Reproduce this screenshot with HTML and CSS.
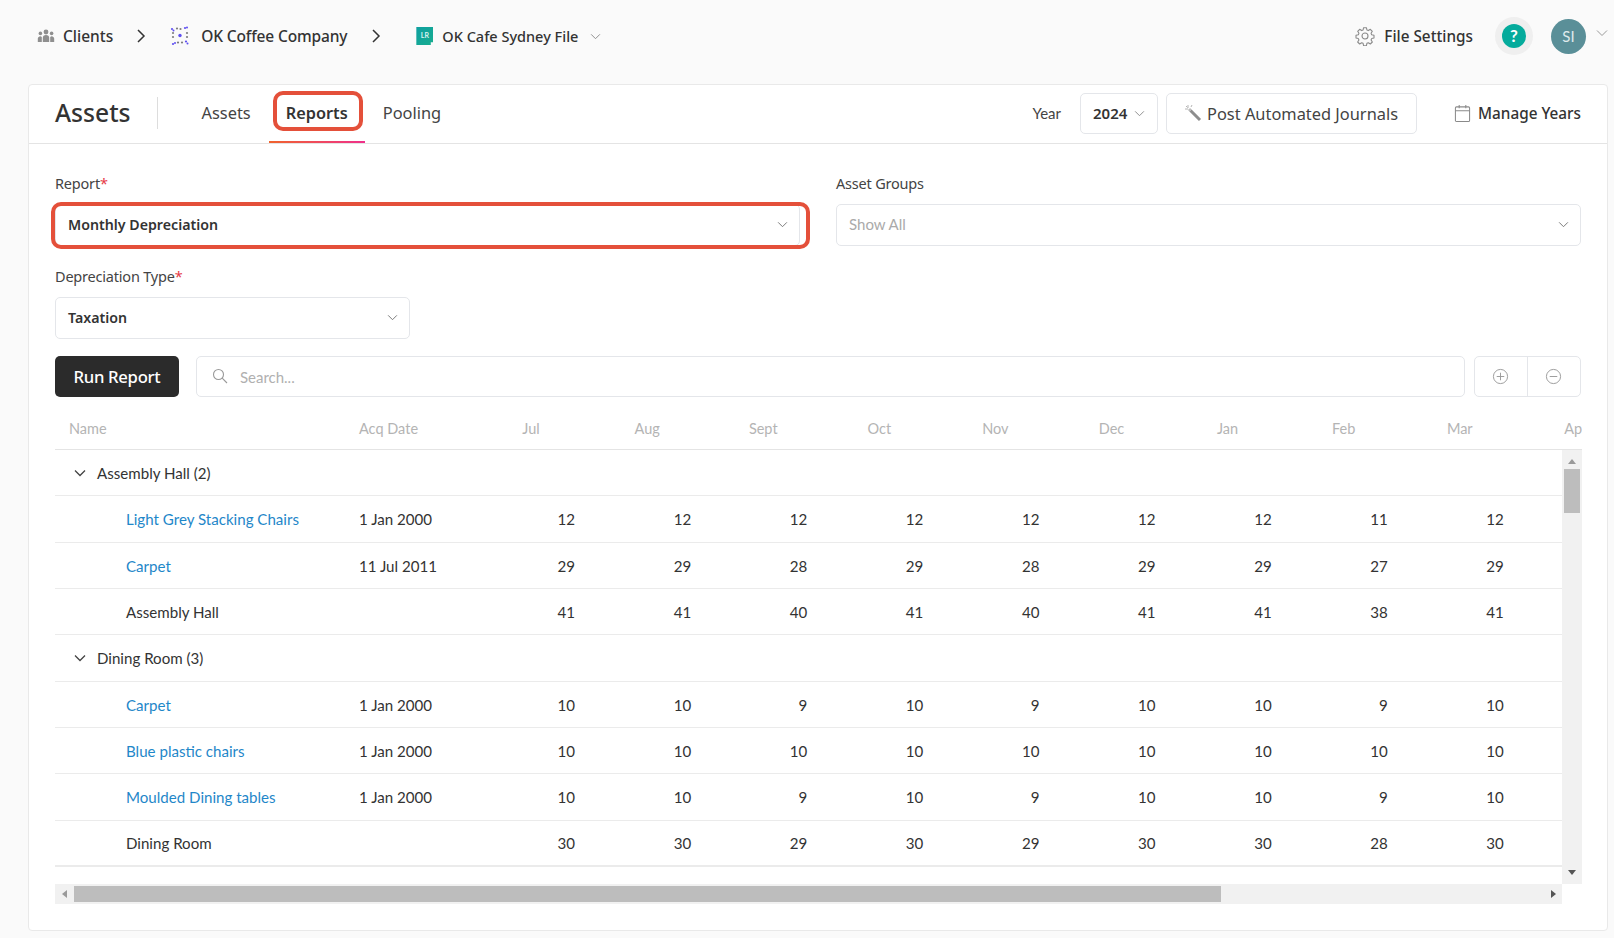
FILE: index.html
```html
<!DOCTYPE html>
<html lang="en">
<head>
<meta charset="utf-8">
<title>Assets - Reports</title>
<link rel="stylesheet" href="styles.css">
</head>
<body>
<header class="topbar">
  <nav class="crumbs">
    <a class="crumb crumb-clients">
      <svg class="ico-people" viewBox="0 0 18 14"><g fill="#8f8f8f"><circle cx="9" cy="3" r="2.4"/><circle cx="3.4" cy="4.4" r="1.8"/><circle cx="14.6" cy="4.4" r="1.8"/><path d="M5.8 13V9a3.2 3 0 0 1 6.4 0v4z"/><path d="M.8 13V9.4a2.4 2.4 0 0 1 4-1.4v5zM17.2 13V9.4a2.4 2.4 0 0 0-4-1.4v5z"/></g></svg>
      <span>Clients</span>
    </a>
    <svg class="sep" viewBox="0 0 10 16"><path d="M2 2l6 6-6 6" fill="none" stroke="#333" stroke-width="1.5"/></svg>
    <a class="crumb crumb-company">
      <svg class="ico-dots" viewBox="0 0 20 20"><g fill="#7d7d7d"><circle cx="7" cy="2.5" r="1.1"/><circle cx="10.5" cy="3" r="1.1"/><circle cx="3" cy="7" r="1.1"/><circle cx="3" cy="11" r="1.1"/><circle cx="17" cy="7" r="1.1"/><circle cx="17" cy="11" r="1.1"/><circle cx="8" cy="16.5" r="1.1"/><circle cx="12" cy="16.5" r="1.1"/></g><g fill="#5f50f0"><circle cx="10" cy="9.5" r="1.7"/><circle cx="15" cy="2" r="1.1"/><circle cx="17" cy="1.5" r="1"/><circle cx="2" cy="3" r="1.1"/><circle cx="3.5" cy="4.5" r="1"/><circle cx="3" cy="18" r="1.1"/><circle cx="5" cy="17" r="1"/><circle cx="16" cy="15.5" r="1.1"/><circle cx="17.5" cy="17.5" r="1"/></g></svg>
      <span>OK Coffee Company</span>
    </a>
    <svg class="sep sep-second" viewBox="0 0 10 16"><path d="M2 2l6 6-6 6" fill="none" stroke="#333" stroke-width="1.5"/></svg>
    <a class="crumb crumb-file">
      <span class="ico-lr">LR</span>
      <span>OK Cafe Sydney File</span>
      <svg class="chev" viewBox="0 0 12 8"><path d="M1 1.5l5 5 5-5" fill="none" stroke="#8c8c8c" stroke-width="1.1"/></svg>
    </a>
  </nav>
  <div class="top-actions">
    <a class="file-settings">
      <svg class="ico-gear" viewBox="0 0 24 24"><path d="M10.3 2h3.4l.6 2.8 1.7.7 2.4-1.5 2.4 2.4-1.5 2.4.7 1.7 2.8.6v3.4l-2.8.6-.7 1.7 1.5 2.4-2.4 2.4-2.4-1.5-1.7.7-.6 2.8h-3.4l-.6-2.8-1.7-.7-2.4 1.5-2.4-2.4 1.5-2.4-.7-1.7-2.8-.6v-3.4l2.8-.6.7-1.7-1.5-2.4 2.4-2.4 2.4 1.5 1.7-.7z" fill="none" stroke="#8a8a8a" stroke-width="1.3" stroke-linejoin="round"/><circle cx="12" cy="12" r="3.6" fill="none" stroke="#8a8a8a" stroke-width="1.3"/></svg>
      <span>File Settings</span>
    </a>
    <span class="help"><span class="help-dot">?</span></span>
    <span class="avatar">SI</span>
    <svg class="chev chev-user" viewBox="0 0 12 8"><path d="M1 1.5l5 5 5-5" fill="none" stroke="#9a9a9a" stroke-width="1"/></svg>
  </div>
</header>

<main class="card">
  <div class="card-head">
    <h1 class="title">Assets</h1>
    <div class="tabs">
      <a class="tab">Assets</a>
      <a class="tab tab-active"><span class="mark-tab">Reports</span></a>
      <a class="tab">Pooling</a>
    </div>
    <div class="head-actions">
      <span class="year-label">Year</span>
      <button class="btn btn-year">2024<svg class="chev" viewBox="0 0 12 8"><path d="M1 1.5l5 5 5-5" fill="none" stroke="#8c8c8c" stroke-width="1.1"/></svg></button>
      <button class="btn btn-post">
        <svg class="ico-wand" viewBox="0 0 18 18"><path d="M6.5 6.5L16 16" stroke="#8d8d8d" stroke-width="3"/><path d="M5 5l1.6 1.6" stroke="#bbb" stroke-width="3"/><g stroke="#b5b5b5" stroke-width="1"><path d="M4 1v3M1 5h3M2 2l1.5 1.5M8 1L7 3"/></g></svg>
        Post Automated Journals
      </button>
      <a class="manage">
        <svg class="ico-cal" viewBox="0 0 18 20"><rect x="1.5" y="3" width="15" height="15.5" rx="1.2" fill="none" stroke="#8a8a8a" stroke-width="1.1"/><path d="M1.5 7h15M5.5 1v3.5M12.5 1v3.5" stroke="#8a8a8a" stroke-width="1.1" fill="none"/></svg>
        Manage Years
      </a>
    </div>
  </div>

  <div class="card-body">
    <div class="filters">
      <div class="field">
        <label class="label">Report<i>*</i></label>
        <div class="select select-marked"><b>Monthly Depreciation</b><svg class="chev" viewBox="0 0 12 8"><path d="M1 1.5l5 5 5-5" fill="none" stroke="#777" stroke-width="1.1"/></svg></div>
      </div>
      <div class="field">
        <label class="label">Asset Groups</label>
        <div class="select"><span class="placeholder">Show All</span><svg class="chev" viewBox="0 0 12 8"><path d="M1 1.5l5 5 5-5" fill="none" stroke="#777" stroke-width="1.1"/></svg></div>
      </div>
      <div class="field field-type">
        <label class="label">Depreciation Type<i>*</i></label>
        <div class="select"><b>Taxation</b><svg class="chev" viewBox="0 0 12 8"><path d="M1 1.5l5 5 5-5" fill="none" stroke="#777" stroke-width="1.1"/></svg></div>
      </div>
    </div>

    <div class="toolbar">
      <button class="btn-run">Run Report</button>
      <div class="search">
        <svg class="ico-search" viewBox="0 0 16 16"><circle cx="6.5" cy="6.5" r="5" fill="none" stroke="#999" stroke-width="1.1"/><path d="M10.2 10.2L15 15" stroke="#999" stroke-width="1.1"/></svg>
        <span>Search...</span>
      </div>
      <div class="zoom-group">
        <span class="zoom-btn"><svg viewBox="0 0 18 18"><circle cx="9" cy="9" r="7.5" fill="none" stroke="#999" stroke-width="1"/><path d="M5 9h8M9 5v8" stroke="#999" stroke-width="1"/></svg></span>
        <span class="zoom-btn"><svg viewBox="0 0 18 18"><circle cx="9" cy="9" r="7.5" fill="none" stroke="#999" stroke-width="1"/><path d="M5 9h8" stroke="#999" stroke-width="1"/></svg></span>
      </div>
    </div>

    <div class="grid-wrap">
      <div class="grid-head">
        <span class="hc-name">Name</span><span class="hc-date">Acq Date</span>
        <span>Jul</span><span>Aug</span><span>Sept</span><span>Oct</span><span>Nov</span><span>Dec</span><span>Jan</span><span>Feb</span><span>Mar</span><span>Apr</span>
      </div>
      <div class="grid-main">
        <div class="grid-rows">
          <div class="row row-group"><svg class="chev" viewBox="0 0 12 8"><path d="M1 1.5l5 5 5-5" fill="none" stroke="#444" stroke-width="1.3"/></svg><span>Assembly Hall (2)</span></div>
          <div class="row"><a class="name link">Light Grey Stacking Chairs</a><span class="date">1 Jan 2000</span><span>12</span><span>12</span><span>12</span><span>12</span><span>12</span><span>12</span><span>12</span><span>11</span><span>12</span></div>
          <div class="row"><a class="name link">Carpet</a><span class="date">11 Jul 2011</span><span>29</span><span>29</span><span>28</span><span>29</span><span>28</span><span>29</span><span>29</span><span>27</span><span>29</span></div>
          <div class="row"><span class="name">Assembly Hall</span><span class="date"></span><span>41</span><span>41</span><span>40</span><span>41</span><span>40</span><span>41</span><span>41</span><span>38</span><span>41</span></div>
          <div class="row row-group"><svg class="chev" viewBox="0 0 12 8"><path d="M1 1.5l5 5 5-5" fill="none" stroke="#444" stroke-width="1.3"/></svg><span>Dining Room (3)</span></div>
          <div class="row"><a class="name link">Carpet</a><span class="date">1 Jan 2000</span><span>10</span><span>10</span><span>9</span><span>10</span><span>9</span><span>10</span><span>10</span><span>9</span><span>10</span></div>
          <div class="row"><a class="name link">Blue plastic chairs</a><span class="date">1 Jan 2000</span><span>10</span><span>10</span><span>10</span><span>10</span><span>10</span><span>10</span><span>10</span><span>10</span><span>10</span></div>
          <div class="row"><a class="name link">Moulded Dining tables</a><span class="date">1 Jan 2000</span><span>10</span><span>10</span><span>9</span><span>10</span><span>9</span><span>10</span><span>10</span><span>9</span><span>10</span></div>
          <div class="row row-last"><span class="name">Dining Room</span><span class="date"></span><span>30</span><span>30</span><span>29</span><span>30</span><span>29</span><span>30</span><span>30</span><span>28</span><span>30</span></div>
        </div>
        <div class="vscroll">
          <i class="arrow-up"></i>
          <i class="vthumb"></i>
          <i class="arrow-down"></i>
        </div>
      </div>
      <div class="hscroll">
        <i class="arrow-left"></i>
        <i class="hthumb"></i>
        <i class="arrow-right"></i>
      </div>
    </div>
  </div>
</main>
</body>
</html>
```
FILE: styles.css
```css
* { box-sizing: border-box; }
html, body { margin: 0; padding: 0; }
body {
  width: 1614px;
  height: 938px;
  overflow: hidden;
  background: #fafafa;
  color: #333;
  font-family: "Noto Sans", "Liberation Sans", sans-serif;
}
svg { display: block; flex: none; }

/* top bar */
.topbar {
  height: 84px;
  padding: 0 6px 12px 37px;
  display: flex;
  align-items: center;
  justify-content: space-between;
}
.crumbs { display: flex; align-items: center; }
.crumb {
  display: flex;
  align-items: center;
  font-size: 15.5px;
  font-weight: 500;
  color: #333;
}
.crumb-company { letter-spacing: -.15px; }
.crumb-file { font-size: 14.5px; }
.ico-people { width: 18px; height: 14px; margin-right: 8px; }
.ico-dots { width: 20px; height: 20px; margin-right: 11px; }
.ico-lr {
  width: 17px;
  height: 18px;
  margin-right: 9px;
  background: linear-gradient(135deg, #0f9fa0, #17ad8f);
  color: #d9f3f1;
  font: 700 7px/17px "Lato", sans-serif;
  text-align: center;
  clip-path: polygon(0 0, 100% 0, 100% 85%, 85% 85%, 85% 100%, 0 100%);
}
.sep { width: 10px; height: 16px; margin: 0 24px 0 23px; }
.sep-second { margin: 0 35px 0 24px; }
.chev { width: 11px; height: 7px; }
.crumb-file .chev { margin-left: 12px; }
.top-actions { display: flex; align-items: center; }
.file-settings {
  display: flex;
  align-items: center;
  font-size: 15.3px;
  font-weight: 500;
  color: #333;
}
.ico-gear { width: 20px; height: 20px; margin-right: 9px; }
.help {
  width: 38px;
  height: 38px;
  margin-left: 22px;
  border-radius: 50%;
  background: #efefef;
  display: flex;
  align-items: center;
  justify-content: center;
}
.help-dot {
  width: 24px;
  height: 24px;
  border-radius: 50%;
  background: #05ab9c;
  color: #fff;
  font: 700 17px/24px "Lato", sans-serif;
  text-align: center;
}
.avatar {
  width: 35px;
  height: 35px;
  margin-left: 18px;
  border-radius: 50%;
  background: #5a8f98;
  color: #dfeaec;
  font: 400 15px/35px "Lato", sans-serif;
  text-align: center;
}
.chev-user { width: 12px; height: 8px; margin: -6px 0 0 10px; }

/* card */
.card {
  width: 1580px;
  height: 847px;
  margin-left: 28px;
  background: #fff;
  border: 1px solid #e9e9e9;
  border-radius: 4px;
}
.card-head {
  height: 59px;
  padding: 0 26px 2px;
  display: flex;
  align-items: center;
  border-bottom: 1px solid #e4e4e4;
}
.title {
  margin: 0;
  padding-right: 26px;
  height: 32px;
  border-right: 1px solid #ddd;
  font-size: 24.6px;
  line-height: 32px;
  font-weight: 500;
  color: #333;
}
.tabs { display: flex; align-self: stretch; margin: 0 0 -2px 44px; }
.tab {
  display: flex;
  align-items: center;
  padding: 0 17px 4px 0;
  font-size: 16.4px;
  color: #444;
}
.tab-active {
  width: 96px;
  padding: 0 0 1px;
  justify-content: center;
  margin: 0 18px 0 1px;
  font-size: 16.3px;
  font-weight: 600;
  color: #333;
  border-bottom: 2px solid;
  border-image: linear-gradient(90deg, #f0642c, #ef2f8c) 1;
}
.mark-tab { position: relative; }
.mark-tab::after {
  content: "";
  position: absolute;
  left: -13px;
  right: -15px;
  top: -11px;
  bottom: -7px;
  border: 4px solid #e4503a;
  border-radius: 10px;
}
.head-actions { margin-left: auto; display: flex; align-items: center; }
.year-label { font: 400 15px "Lato", sans-serif; color: #444; margin-right: 19px; }
.btn {
  height: 41px;
  background: #fff;
  border: 1px solid #e4e6ea;
  border-radius: 5px;
  display: flex;
  align-items: center;
  font-family: "Noto Sans", sans-serif;
  color: #333;
}
.btn-year {
  width: 78px;
  padding: 0 0 0 12px;
  font-size: 15px;
  font-weight: 600;
  gap: 7px;
  margin-right: 8px;
}
.btn-post {
  width: 251px;
  padding: 0 0 0 17px;
  font-size: 16.4px;
  gap: 5px;
  color: #444;
}
.ico-wand { width: 18px; height: 18px; }
.manage {
  margin-left: 37px;
  display: flex;
  align-items: center;
  gap: 7px;
  font-size: 15.3px;
  font-weight: 500;
}
.ico-cal { width: 17px; height: 19px; }

.card-body { padding: 28px 26px 0; }
.filters {
  display: grid;
  grid-template-columns: 745px 745px;
  column-gap: 36px;
  row-gap: 19px;
}
.label {
  display: block;
  height: 22px;
  margin-bottom: 10px;
  font: 400 14.5px/22px "Noto Sans", sans-serif;
  letter-spacing: -.2px;
  color: #444;
}
.label i { color: #e63946; font-style: normal; }
.field-type { width: 355px; }
.select {
  position: relative;
  height: 42px;
  padding: 0 11px 2px 12px;
  background: #fff;
  border: 1px solid #e4e6ea;
  border-radius: 5px;
  display: flex;
  align-items: center;
  justify-content: space-between;
  font-size: 14.2px;
  color: #333;
}
.select b { font-weight: 600; }
.placeholder { font: 400 15px "Lato", sans-serif; color: #aaa; }
.select-marked::after {
  content: "";
  position: absolute;
  left: -5px;
  right: -11px;
  top: -3px;
  bottom: -4px;
  border: 4px solid #e4503a;
  border-radius: 10px;
}

.toolbar { display: flex; margin-top: 17px; height: 41px; }
.btn-run {
  width: 124px;
  height: 41px;
  border: 0;
  border-radius: 5px;
  background: #2b2b2b;
  color: #fff;
  font: 500 16.7px "Noto Sans", sans-serif;
  letter-spacing: -.3px;
}
.search {
  width: 1270px;
  margin-left: 17px;
  padding-left: 15px;
  border: 1px solid #e4e6ea;
  border-radius: 5px;
  display: flex;
  align-items: center;
  gap: 12px;
  font: 400 15px "Lato", sans-serif;
  color: #b0b0b0;
}
.ico-search { width: 16px; height: 16px; margin-top: -2px; }
.zoom-group {
  width: 107px;
  margin-left: 9px;
  display: flex;
  border: 1px solid #e4e6ea;
  border-radius: 5px;
}
.zoom-btn {
  flex: 1;
  display: flex;
  align-items: center;
  justify-content: center;
  padding-right: 2px;
}
.zoom-btn + .zoom-btn { border-left: 1px solid #e4e6ea; }
.zoom-btn svg { width: 17px; height: 17px; }

/* data grid */
.grid-wrap { width: 1527px; font-family: "Lato", sans-serif; overflow: hidden; }
.grid-head {
  height: 53px;
  padding-top: 10px;
  display: grid;
  grid-template-columns: 304px 114px repeat(10, 116.1px);
  align-items: center;
  border-bottom: 1px solid #e4e4e4;
  font-size: 14.5px;
  color: #b4b4b4;
  text-align: center;
  white-space: nowrap;
  overflow: hidden;
}
.hc-name { text-align: left; padding-left: 14px; }
.hc-date { text-align: left; }
.grid-main { display: flex; height: 434px; }
.grid-rows { width: 1507px; overflow: hidden; flex: none; }
.row {
  height: 46.33px;
  padding-top: 1px;
  display: grid;
  grid-template-columns: 304px 114px repeat(9, 116.1px);
  align-items: center;
  border-bottom: 1px solid #ebebeb;
  font-size: 15.1px;
  color: #333;
  text-align: right;
  white-space: nowrap;
}
.row > span { padding-right: 14px; }
.row .name { padding-left: 71px; text-align: left; padding-right: 0; }
.row .date { text-align: left; padding: 0; }
.link { color: #1f87c9; }
.row-group {
  display: flex;
  align-items: center;
  padding-left: 19px;
  gap: 11px;
  text-align: left;
}
.row-group > span { padding: 0; }
.row-group .chev { width: 12px; height: 8px; }
.row-last { border-bottom-width: 2px; }

.vscroll {
  width: 20px;
  flex: none;
  background: #f1f1f1;
  position: relative;
  display: flex;
  flex-direction: column;
  align-items: center;
}
.vthumb { width: 16px; height: 44px; margin-top: 5px; background: #bdbdbd; }
.arrow-up {
  margin-top: 9px;
  border: 4px solid transparent;
  border-top: 0;
  border-bottom: 5px solid #9a9a9a;
}
.arrow-down {
  margin-top: auto;
  margin-bottom: 9px;
  border: 4px solid transparent;
  border-bottom: 0;
  border-top: 5px solid #555;
}
.hscroll {
  width: 1507px;
  height: 20px;
  background: #f1f1f1;
  display: flex;
  align-items: center;
}
.hthumb { width: 1147px; height: 16px; margin-left: 7px; background: #bdbdbd; }
.arrow-left {
  margin-left: 7px;
  border: 4px solid transparent;
  border-left: 0;
  border-right: 5px solid #9a9a9a;
}
.arrow-right {
  margin-left: auto;
  margin-right: 6px;
  border: 4px solid transparent;
  border-right: 0;
  border-left: 5px solid #555;
}
```
